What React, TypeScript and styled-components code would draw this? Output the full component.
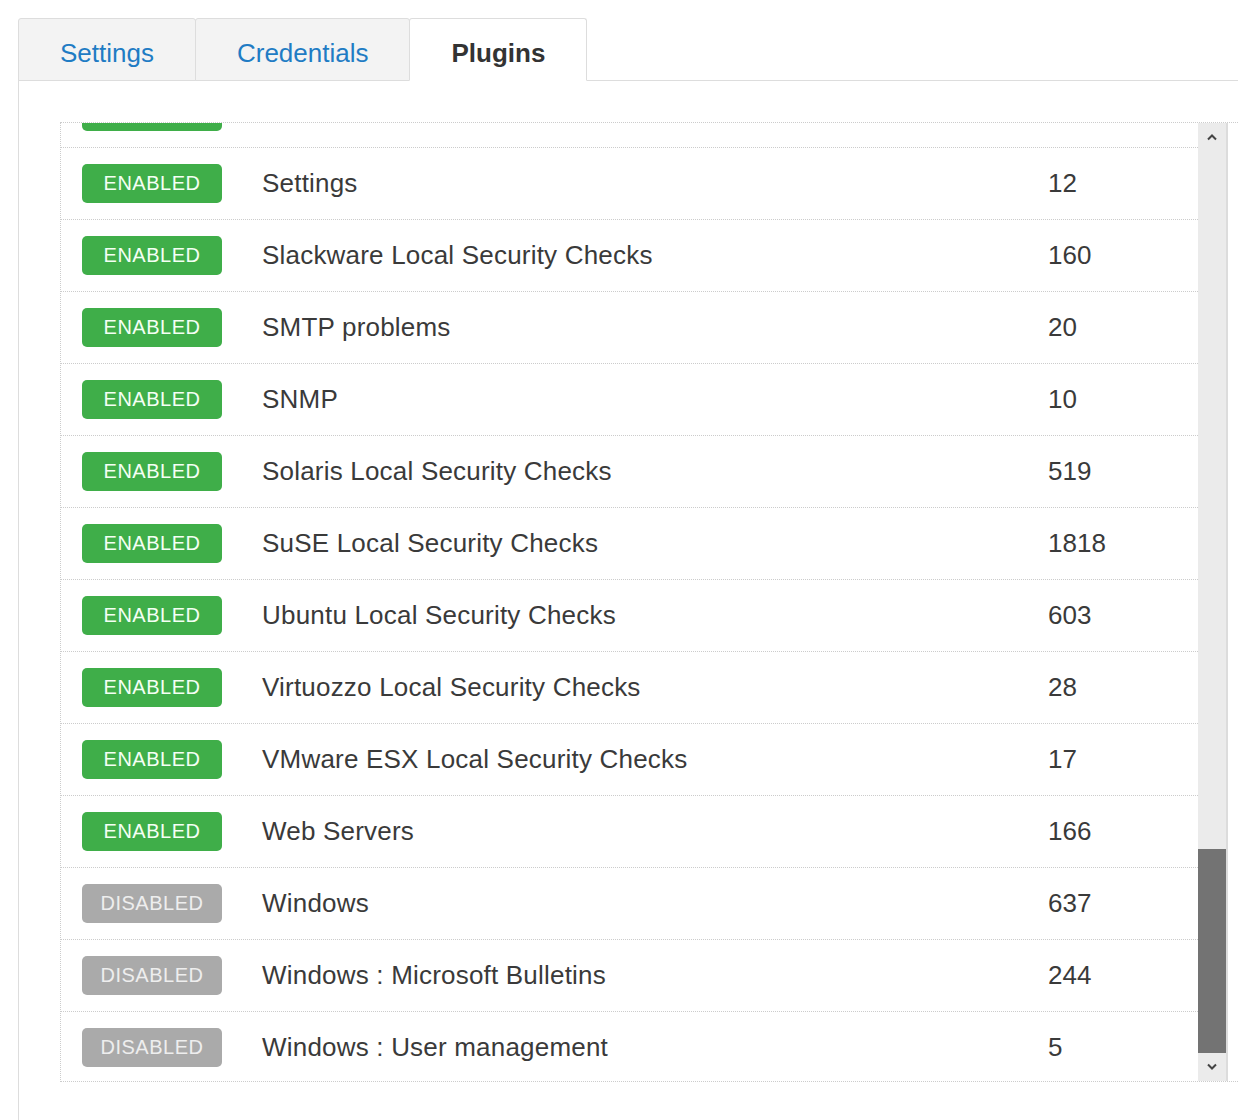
import React from "react";
import styled, { createGlobalStyle } from "styled-components";

const Global = createGlobalStyle`
  html, body {
    margin: 0;
    padding: 0;
    background: #ffffff;
    overflow: hidden;
    font-family: "Liberation Sans", Arial, sans-serif;
  }
`;

const Page = styled.div`
  padding: 18px 0 0 18px;
  width: 1400px;
`;

const TabBar = styled.ul`
  display: flex;
  margin: 0;
  padding: 0;
  list-style: none;
  border-bottom: 1px solid #dddddd;
`;

const Tab = styled.li<{ $active?: boolean }>`
  box-sizing: border-box;
  height: 63px;
  margin-bottom: -1px;
  margin-left: -1px;
  &:first-child {
    margin-left: 0;
  }
  padding: 7px 41px 0;
  display: flex;
  align-items: center;
  border: 1px solid #dddddd;
  border-bottom-color: ${(p) => (p.$active ? "#ffffff" : "#dddddd")};
  border-radius: 3px 3px 0 0;
  background: ${(p) => (p.$active ? "#ffffff" : "#f3f3f3")};
  color: ${(p) => (p.$active ? "#333333" : "#1f7cc4")};
  font-size: 26px;
  font-weight: ${(p) => (p.$active ? 700 : 400)};
  position: relative;
  z-index: ${(p) => (p.$active ? 1 : 0)};
`;

const Panel = styled.div`
  border-left: 1px solid #dddddd;
  padding: 41px 0 0 41px;
  min-height: 1100px;
`;

const ListBox = styled.div`
  box-sizing: border-box;
  width: 1260px;
  height: 960px;
  border: 1px dotted #cccccc;
  display: flex;
`;

const Viewport = styled.div`
  width: 1137px;
  height: 958px;
  overflow: hidden;
`;

const List = styled.div`
  margin-top: -47px;
`;

const Row = styled.div`
  box-sizing: border-box;
  height: 72px;
  display: flex;
  align-items: center;
  padding-left: 21px;
  border-bottom: 1px dotted #cccccc;
`;

const Badge = styled.span<{ $enabled: boolean }>`
  box-sizing: border-box;
  width: 140px;
  height: 39px;
  margin-right: 40px;
  border-radius: 5px;
  display: flex;
  align-items: center;
  justify-content: center;
  font-size: 20px;
  letter-spacing: 0.5px;
  background: ${(p) => (p.$enabled ? "#3fae49" : "#aaaaaa")};
  color: ${(p) => (p.$enabled ? "#f4fff4" : "#eeeeee")};
`;

const Name = styled.span`
  width: 786px;
  font-size: 26px;
  letter-spacing: 0.2px;
  color: #3a3a3a;
`;

const Count = styled.span`
  font-size: 26px;
  color: #3a3a3a;
`;

const Scrollbar = styled.div`
  width: 28px;
  height: 958px;
  background: #ebebeb;
  border-right: 2px solid #dcdcdc;
  display: flex;
  flex-direction: column;
`;

const ScrollButton = styled.div`
  height: 28px;
  display: flex;
  align-items: center;
  justify-content: center;
`;

const Track = styled.div`
  flex: 1;
  display: flex;
  flex-direction: column;
  justify-content: flex-end;
`;

const Thumb = styled.div`
  height: 204px;
  background: #737373;
`;

type Plugin = { name: string; count: number | null; enabled: boolean };

const plugins: Plugin[] = [
  { name: "", count: null, enabled: true },
  { name: "Settings", count: 12, enabled: true },
  { name: "Slackware Local Security Checks", count: 160, enabled: true },
  { name: "SMTP problems", count: 20, enabled: true },
  { name: "SNMP", count: 10, enabled: true },
  { name: "Solaris Local Security Checks", count: 519, enabled: true },
  { name: "SuSE Local Security Checks", count: 1818, enabled: true },
  { name: "Ubuntu Local Security Checks", count: 603, enabled: true },
  { name: "Virtuozzo Local Security Checks", count: 28, enabled: true },
  { name: "VMware ESX Local Security Checks", count: 17, enabled: true },
  { name: "Web Servers", count: 166, enabled: true },
  { name: "Windows", count: 637, enabled: false },
  { name: "Windows : Microsoft Bulletins", count: 244, enabled: false },
  { name: "Windows : User management", count: 5, enabled: false },
];

const Chevron = ({ up }: { up?: boolean }) => (
  <svg width="12" height="8" viewBox="0 0 12 8">
    <polyline
      points={up ? "2,6.5 6,2.5 10,6.5" : "2,1.5 6,5.5 10,1.5"}
      fill="none"
      stroke="#444"
      strokeWidth="2"
    />
  </svg>
);

export default function App() {
  return (
    <Page>
      <Global />
      <TabBar>
        <Tab>Settings</Tab>
        <Tab>Credentials</Tab>
        <Tab $active>Plugins</Tab>
      </TabBar>
      <Panel>
        <ListBox>
          <Viewport>
            <List>
              {plugins.map((p, i) => (
                <Row key={i}>
                  <Badge $enabled={p.enabled}>
                    {p.name ? (p.enabled ? "ENABLED" : "DISABLED") : ""}
                  </Badge>
                  <Name>{p.name}</Name>
                  <Count>{p.count}</Count>
                </Row>
              ))}
            </List>
          </Viewport>
          <Scrollbar>
            <ScrollButton>
              <Chevron up />
            </ScrollButton>
            <Track>
              <Thumb />
            </Track>
            <ScrollButton>
              <Chevron />
            </ScrollButton>
          </Scrollbar>
        </ListBox>
      </Panel>
    </Page>
  );
}
